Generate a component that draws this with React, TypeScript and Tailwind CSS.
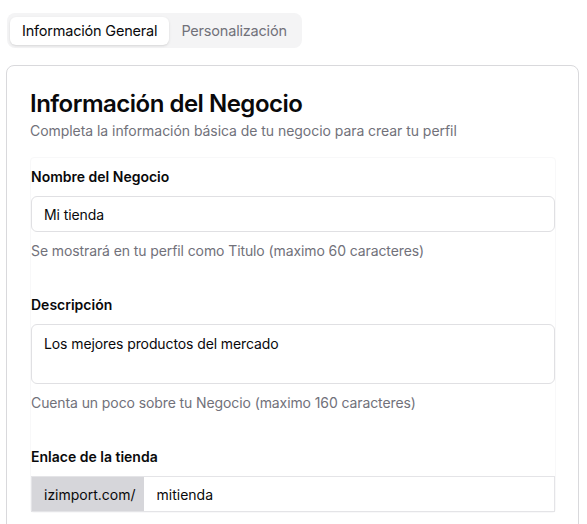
import React, { useState } from 'react';

const font = { fontFamily: 'Inter, "Noto Sans", sans-serif' };

function Field({ label, help, children, className = '' }: { label: string; help?: string; children: React.ReactNode; className?: string }) {
  return (
    <div className={`flex flex-col ${className}`}>
      <label className="text-[14px] font-semibold text-[#09090b] tracking-[0px] leading-5">{label}</label>
      <div className="mt-[9px]">{children}</div>
      {help && <p className="mt-[9px] text-[14px] text-[#71717a] leading-5 tracking-[-0.1px]">{help}</p>}
    </div>
  );
}

export default function App() {
  const [tab, setTab] = useState('general');

  return (
    <div className="min-h-screen bg-white" style={font}>
      <div className="pl-[6px] pr-[8px] pt-[13px]">
        {/* Tabs */}
        <div className="ml-px inline-flex items-center h-[35px] rounded-lg bg-[#f4f4f5] p-[3px]">
          <button
            onClick={() => setTab('general')}
            className={`h-[28px] pt-px px-3 rounded-md text-[14.5px] tracking-[-0.2px] ${tab === 'general' ? 'bg-white text-[#09090b] shadow-sm' : 'text-[#71717a]'}`}
          >
            Información General
          </button>
          <button
            onClick={() => setTab('perso')}
            className={`h-[28px] pt-px px-3 rounded-md text-[14.5px] tracking-[-0.2px] ${tab === 'perso' ? 'bg-white text-[#09090b] shadow-sm' : 'text-[#71717a]'}`}
          >
            Personalización
          </button>
        </div>

        {/* Card */}
        <div className="mt-[17px] rounded-lg border border-[#d9d9dc] bg-white pl-[23px] pr-[22px] pt-[22px] pb-6">
          <h2 className="text-[24px] font-semibold text-[#09090b] leading-8 tracking-[-0.5px]">Información del Negocio</h2>
          <p className="mt-px text-[14px] text-[#71717a] leading-5 tracking-[-0.05px]">
            Completa la información básica de tu negocio para crear tu perfil
          </p>

          <div className="mt-[16px] rounded-sm border border-[#f8f8f9] pt-[9px] flex flex-col">
            <Field label="Nombre del Negocio" help="Se mostrará en tu perfil como Titulo (maximo 60 caracteres)">
              <input
                defaultValue="Mi tienda"
                className="w-full h-[36px] rounded-md border border-[#e0e0e3] px-3 text-[14px] text-[#09090b] tracking-[-0.1px] outline-none"
              />
            </Field>

            <Field className="mt-[34px]" label="Descripción" help="Cuenta un poco sobre tu Negocio (maximo 160 caracteres)">
              <textarea
                defaultValue="Los mejores productos del mercado"
                className="block w-full h-[60px] resize-none rounded-md border border-[#e0e0e3] px-3 py-[8px] text-[14px] text-[#09090b] tracking-[-0.1px] outline-none"
              />
            </Field>

            <Field className="mt-[34px]" label="Enlace de la tienda">
              <div className="flex h-[36px] border border-[#e4e4e7]">
                <span className="flex items-center bg-[#d6d6da] pl-3 pr-2 text-[14px] text-[#09090b] tracking-[0px]">izimport.com/</span>
                <input
                  defaultValue="mitienda"
                  className="flex-1 pl-[13px] pr-3 text-[14px] text-[#09090b] tracking-[0px] outline-none"
                />
              </div>
            </Field>
          </div>
        </div>
      </div>
    </div>
  );
}
